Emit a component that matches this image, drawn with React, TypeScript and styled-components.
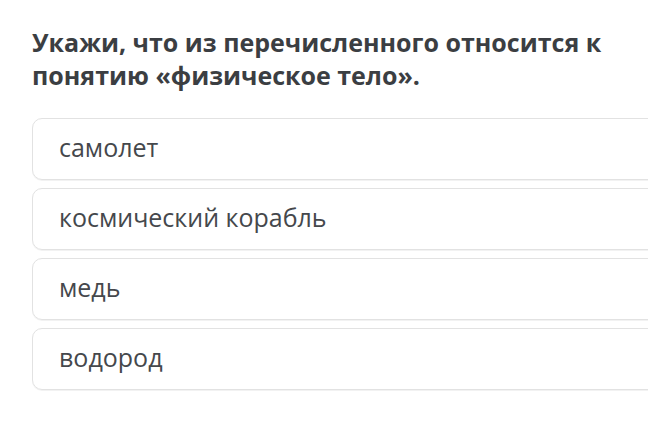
import * as React from 'react';
import styled, { createGlobalStyle } from 'styled-components';

const GlobalStyle = createGlobalStyle`
	html, body {
		margin: 0;
		padding: 0;
		background: #ffffff;
		overflow: hidden;
	}
`;

const Page = styled.div`
	width: 648px;
	height: 423px;
	padding: 26px 0 0 32px;
	box-sizing: border-box;
	font-family: "Open Sans", "Noto Sans", sans-serif;
	overflow: hidden;
`;

const Question = styled.h1`
	margin: 0;
	width: 610px;
	font-size: 25px;
	line-height: 33px;
	font-weight: 700;
	color: #3b3e42;
`;

const Options = styled.div`
	display: flex;
	flex-direction: column;
	gap: 8px;
	margin-top: 26px;
`;

const Option = styled.div`
	width: 640px;
	height: 62px;
	box-sizing: border-box;
	padding: 10px 26px 14px;
	border: 1px solid #e2e2e2;
	border-radius: 10px;
	box-shadow: 0 1px 0 #f2f2f2;
	font-size: 25px;
	line-height: 36px;
	color: #45484c;
	white-space: nowrap;
`;

const answers = ['самолет', 'космический корабль', 'медь', 'водород'];

export default function App() {
	return (
		<Page>
			<GlobalStyle />
			<Question>Укажи, что из перечисленного относится к понятию «физическое тело».</Question>
			<Options>
				{answers.map((a, idx) => (
					<Option key={idx}>{a}</Option>
				))}
			</Options>
		</Page>
	);
}
